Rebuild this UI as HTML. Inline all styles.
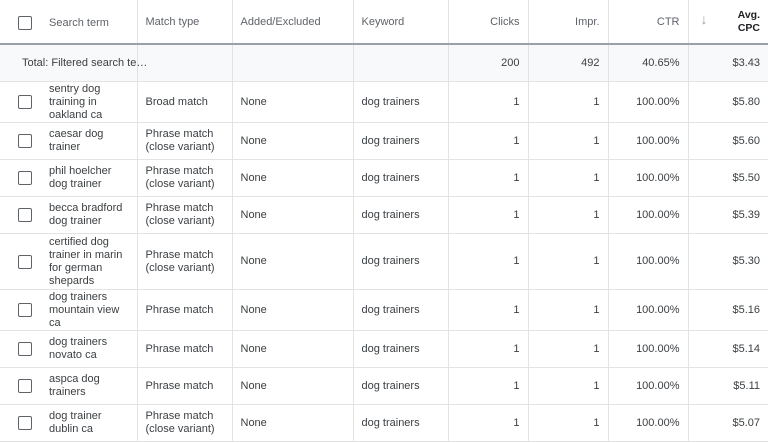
<!DOCTYPE html>
<html><head><style>
body{margin:0;width:768px;height:443px;overflow:hidden;background:#fff;font-family:"Liberation Sans",Arial,sans-serif;font-size:11px;color:#3c4043;}
table{border-collapse:collapse;table-layout:fixed;width:768px;}
td,th{border-right:1px solid #e3e3e3;border-bottom:1px solid #e3e3e3;padding:0 8px;font-weight:normal;line-height:13px;vertical-align:middle;}
td:last-child,th:last-child{border-right:none;}
th{height:41px;padding-top:2px;text-align:left;color:#5f6368;border-bottom:2px solid #9aa0a6;}
.n{text-align:right;}
.cb{display:inline-block;width:12px;height:12px;border:1.5px solid #5f6368;border-radius:2px;vertical-align:middle;}
tr.tot td{background:#f8f9fa;height:36px;}
td.c1{padding-left:18px;}
.c1 .cb{margin-right:17px;}
.st{display:inline-block;vertical-align:middle;width:78px;}
</style></head><body>
<table>
<colgroup><col style="width:137px"><col style="width:95px"><col style="width:121px"><col style="width:95px"><col style="width:80px"><col style="width:80px"><col style="width:80px"><col style="width:80px"></colgroup>
<tr><th class="c1" style="padding-left:18px"><span class="cb" style="margin-right:17px"></span>Search term</th><th>Match type</th><th>Added/Excluded</th><th>Keyword</th><th class="n">Clicks</th><th class="n">Impr.</th><th class="n">CTR</th><th class="n" style="color:#202124;font-weight:bold;font-size:10.5px;position:relative;padding-top:0;height:43px"><span style="position:absolute;left:12px;top:13px;color:#9aa0a6;font-weight:normal;font-size:14px">↓</span>Avg.<br>CPC</th></tr>
<tr class="tot"><td style="white-space:nowrap;overflow:visible;padding-left:22px">Total: Filtered search te…</td><td></td><td></td><td></td><td class="n">200</td><td class="n">492</td><td class="n">40.65%</td><td class="n">$3.43</td></tr>
<tr style="height:41px"><td class="c1"><span class="cb"></span><span class="st">sentry dog training in oakland ca</span></td><td>Broad match</td><td>None</td><td>dog trainers</td><td class="n">1</td><td class="n">1</td><td class="n">100.00%</td><td class="n">$5.80</td></tr>
<tr style="height:37px"><td class="c1"><span class="cb"></span><span class="st">caesar dog trainer</span></td><td>Phrase match (close variant)</td><td>None</td><td>dog trainers</td><td class="n">1</td><td class="n">1</td><td class="n">100.00%</td><td class="n">$5.60</td></tr>
<tr style="height:37px"><td class="c1"><span class="cb"></span><span class="st">phil hoelcher dog trainer</span></td><td>Phrase match (close variant)</td><td>None</td><td>dog trainers</td><td class="n">1</td><td class="n">1</td><td class="n">100.00%</td><td class="n">$5.50</td></tr>
<tr style="height:37px"><td class="c1"><span class="cb"></span><span class="st">becca bradford dog trainer</span></td><td>Phrase match (close variant)</td><td>None</td><td>dog trainers</td><td class="n">1</td><td class="n">1</td><td class="n">100.00%</td><td class="n">$5.39</td></tr>
<tr style="height:56px"><td class="c1"><span class="cb"></span><span class="st">certified dog trainer in marin for german shepards</span></td><td>Phrase match (close variant)</td><td>None</td><td>dog trainers</td><td class="n">1</td><td class="n">1</td><td class="n">100.00%</td><td class="n">$5.30</td></tr>
<tr style="height:41px"><td class="c1"><span class="cb"></span><span class="st">dog trainers mountain view ca</span></td><td>Phrase match</td><td>None</td><td>dog trainers</td><td class="n">1</td><td class="n">1</td><td class="n">100.00%</td><td class="n">$5.16</td></tr>
<tr style="height:37px"><td class="c1"><span class="cb"></span><span class="st">dog trainers novato ca</span></td><td>Phrase match</td><td>None</td><td>dog trainers</td><td class="n">1</td><td class="n">1</td><td class="n">100.00%</td><td class="n">$5.14</td></tr>
<tr style="height:37px"><td class="c1"><span class="cb"></span><span class="st">aspca dog trainers</span></td><td>Phrase match</td><td>None</td><td>dog trainers</td><td class="n">1</td><td class="n">1</td><td class="n">100.00%</td><td class="n">$5.11</td></tr>
<tr style="height:37px"><td class="c1"><span class="cb"></span><span class="st">dog trainer dublin ca</span></td><td>Phrase match (close variant)</td><td>None</td><td>dog trainers</td><td class="n">1</td><td class="n">1</td><td class="n">100.00%</td><td class="n">$5.07</td></tr>
</table>
</body></html>
